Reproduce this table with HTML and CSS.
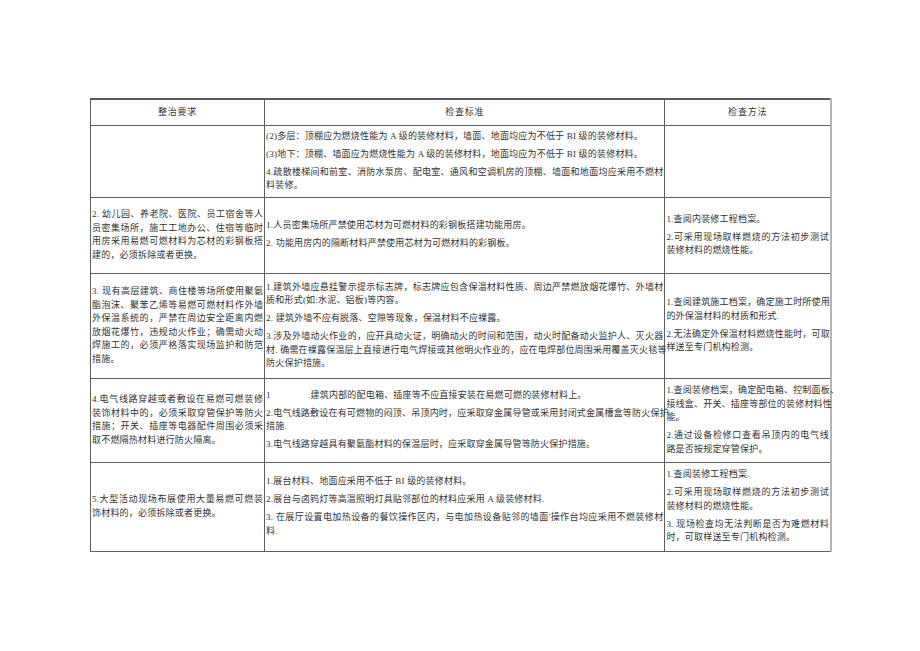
FILE: index.html
```html
<!DOCTYPE html>
<html lang="zh-CN">
<head>
<meta charset="utf-8">
<title>整治要求</title>
<link rel="stylesheet" href="styles.css">
</head>
<body>
<div class="page">
<table class="grid">
<colgroup><col class="c1"><col class="c2"><col class="c3"></colgroup>
<thead>
<tr class="r0"><th>整治要求</th><th>检查标准</th><th>检查方法</th></tr>
</thead>
<tbody>
<tr class="r1">
<td></td>
<td>
<div class="p"><span class="ln end">(2)多层：顶棚应为燃烧性能为 A 级的装修材料，墙面、地面均应为不低于 BI 级的装修材料。</span></div>
<div class="p"><span class="ln end">(3)地下：顶棚、墙面应为燃烧性能为 A 级的装修材料，地面均应为不低于 BI 级的装修材料。</span></div>
<div class="p"><span class="ln">4.疏散楼梯间和前室、消防水泵房、配电室、通风和空调机房的顶棚、墙面和地面均应采用不燃材</span><span class="ln end">料装修。</span></div>
</td>
<td></td>
</tr>
<tr class="r2">
<td>
<div class="p"><span class="ln">2. 幼儿园、养老院、医院、员工宿舍等人</span><span class="ln">员密集场所，施工工地办公、住宿等临时</span><span class="ln">用房采用易燃可燃材料为芯材的彩钢板搭</span><span class="ln end">建的，必须拆除或者更换。</span></div>
</td>
<td>
<div class="p"><span class="ln end">1.人员密集场所严禁使用芯材为可燃材料的彩钢板搭建功能用房。</span></div>
<div class="p"><span class="ln end">2. 功能用房内的隔断材料严禁使用芯材为可燃材料的彩钢板。</span></div>
</td>
<td>
<div class="p"><span class="ln end">1.查阅内装修工程档案。</span></div>
<div class="p"><span class="ln">2.可采用现场取样燃烧的方法初步测试</span><span class="ln end">装修材料的燃烧性能。</span></div>
</td>
</tr>
<tr class="r3">
<td>
<div class="p"><span class="ln">3. 现有高层建筑、商住楼等场所使用聚氨</span><span class="ln">酯泡沫、聚苯乙烯等易燃可燃材料作外墙</span><span class="ln">外保温系统的，严禁在周边安全距离内燃</span><span class="ln">放烟花爆竹，违规动火作业；确需动火动</span><span class="ln">焊施工的，必须严格落实现场监护和防范</span><span class="ln end">措施。</span></div>
</td>
<td>
<div class="p"><span class="ln">1.建筑外墙应悬挂警示提示标志牌，标志牌应包含保温材料性质、周边严禁燃放烟花爆竹、外墙材</span><span class="ln end">质和形式(如:水泥、铝板)等内容。</span></div>
<div class="p"><span class="ln end">2. 建筑外墙不应有脱落、空隙等现象，保温材料不应裸露。</span></div>
<div class="p"><span class="ln">3.涉及外墙动火作业的，应开具动火证，明确动火的时间和范围，动火时配备动火监护人、灭火器</span><span class="ln">材. 确需在裸露保温层上直接进行电气焊接或其他明火作业的，应在电焊部位周围采用覆盖灭火毯等</span><span class="ln end">防火保护措施。</span></div>
</td>
<td>
<div class="p"><span class="ln">1.查阅建筑施工档案，确定施工时所使用</span><span class="ln end">的外保温材料的材质和形式.</span></div>
<div class="p"><span class="ln">2.无法确定外保温材料燃烧性能时，可取</span><span class="ln end">样送至专门机构检测。</span></div>
</td>
</tr>
<tr class="r4">
<td>
<div class="p"><span class="ln">4.电气线路穿越或者敷设在易燃可燃装修</span><span class="ln">装饰材料中的，必须采取穿管保护等防火</span><span class="ln">措施；开关、插座等电器配件周围必须采</span><span class="ln end">取不燃隔热材料进行防火隔离。</span></div>
</td>
<td>
<div class="p"><span class="ln end"><span class="num">1</span>.建筑内部的配电箱、插座等不应直接安装在易燃可燃的装修材料上。</span></div>
<div class="p"><span class="ln">2.电气线路敷设在有可燃物的闷顶、吊顶内时，应采取穿金属导管或采用封闭式金属槽盒等防火保护</span><span class="ln end">措施.</span></div>
<div class="p"><span class="ln end">3.电气线路穿越具有聚氨酯材料的保温层时，应采取穿金属导管等防火保护措施。</span></div>
</td>
<td>
<div class="p"><span class="ln">1.查阅装修档案，确定配电箱、控制面板、</span><span class="ln">接线盒、开关、插座等部位的装修材料性</span><span class="ln end">能。</span></div>
<div class="p"><span class="ln">2.通过设备检修口查看吊顶内的电气线</span><span class="ln end">路是否按规定穿管保护。</span></div>
</td>
</tr>
<tr class="r5">
<td>
<div class="p"><span class="ln">5.大型活动现场布展使用大量易燃可燃装</span><span class="ln end">饰材料的，必须拆除或者更换。</span></div>
</td>
<td>
<div class="p"><span class="ln end">1.展台材料、地面应采用不低于 BI 级的装修材料。</span></div>
<div class="p"><span class="ln end">2.展台与卤钨灯等高温照明灯具贴邻部位的材料应采用 A 级装修材料.</span></div>
<div class="p"><span class="ln">3. 在展厅设置电加热设备的餐饮操作区内，与电加热设备贴邻的墙面'操作台均应采用不燃装修材</span><span class="ln end">料.</span></div>
</td>
<td>
<div class="p"><span class="ln end">1.查阅装修工程档案.</span></div>
<div class="p"><span class="ln">2.可采用现场取样燃烧的方法初步测试</span><span class="ln end">装修材料的燃烧性能。</span></div>
<div class="p"><span class="ln">3. 现场检查均无法判断是否为难燃材料</span><span class="ln end">时，可取样送至专门机构检测。</span></div>
</td>
</tr>
</tbody>
</table>
</div>
</body>
</html>
```
FILE: styles.css
```css
html, body {
  margin: 0;
  padding: 0;
  background: #ffffff;
}

.page {
  padding: 98px 0 0 90px;
  font-family: "Liberation Serif", "Noto Sans CJK SC", serif;
  font-size: 9px;
  color: #333333;
}

.grid {
  border-collapse: collapse;
  table-layout: fixed;
  width: 742px;
  border-top: 2px solid #5a5a5a;
  border-left: 1px solid #5a5a5a;
  border-bottom: 1px solid #5a5a5a;
  border-right: 2px solid #b4b4b4;
}

.c1 { width: 174px; }
.c2 { width: 400px; }
.c3 { width: 166px; }

.grid th,
.grid td {
  border: 1px solid #5f5f5f;
  padding: 0 1px;
  vertical-align: middle;
  line-height: 13.5px;
}

.grid th {
  font-weight: normal;
  text-align: center;
  letter-spacing: 0.8px;
}

.grid td:last-child,
.grid th:last-child {
  border-right: 2px solid #b4b4b4;
}

.r0 { height: 26px; }
.r1 { height: 72px; }
.r2 { height: 76px; }
.r3 { height: 105px; }
.r4 { height: 84px; }
.r5 { height: 89px; }

.p + .p {
  margin-top: 4.5px;
}

.ln {
  display: block;
  white-space: nowrap;
  text-align: justify;
  text-align-last: justify;
  letter-spacing: 0.2px;
}

.ln.end {
  text-align-last: left;
}

.num {
  display: inline-block;
  width: 42px;
}
```
